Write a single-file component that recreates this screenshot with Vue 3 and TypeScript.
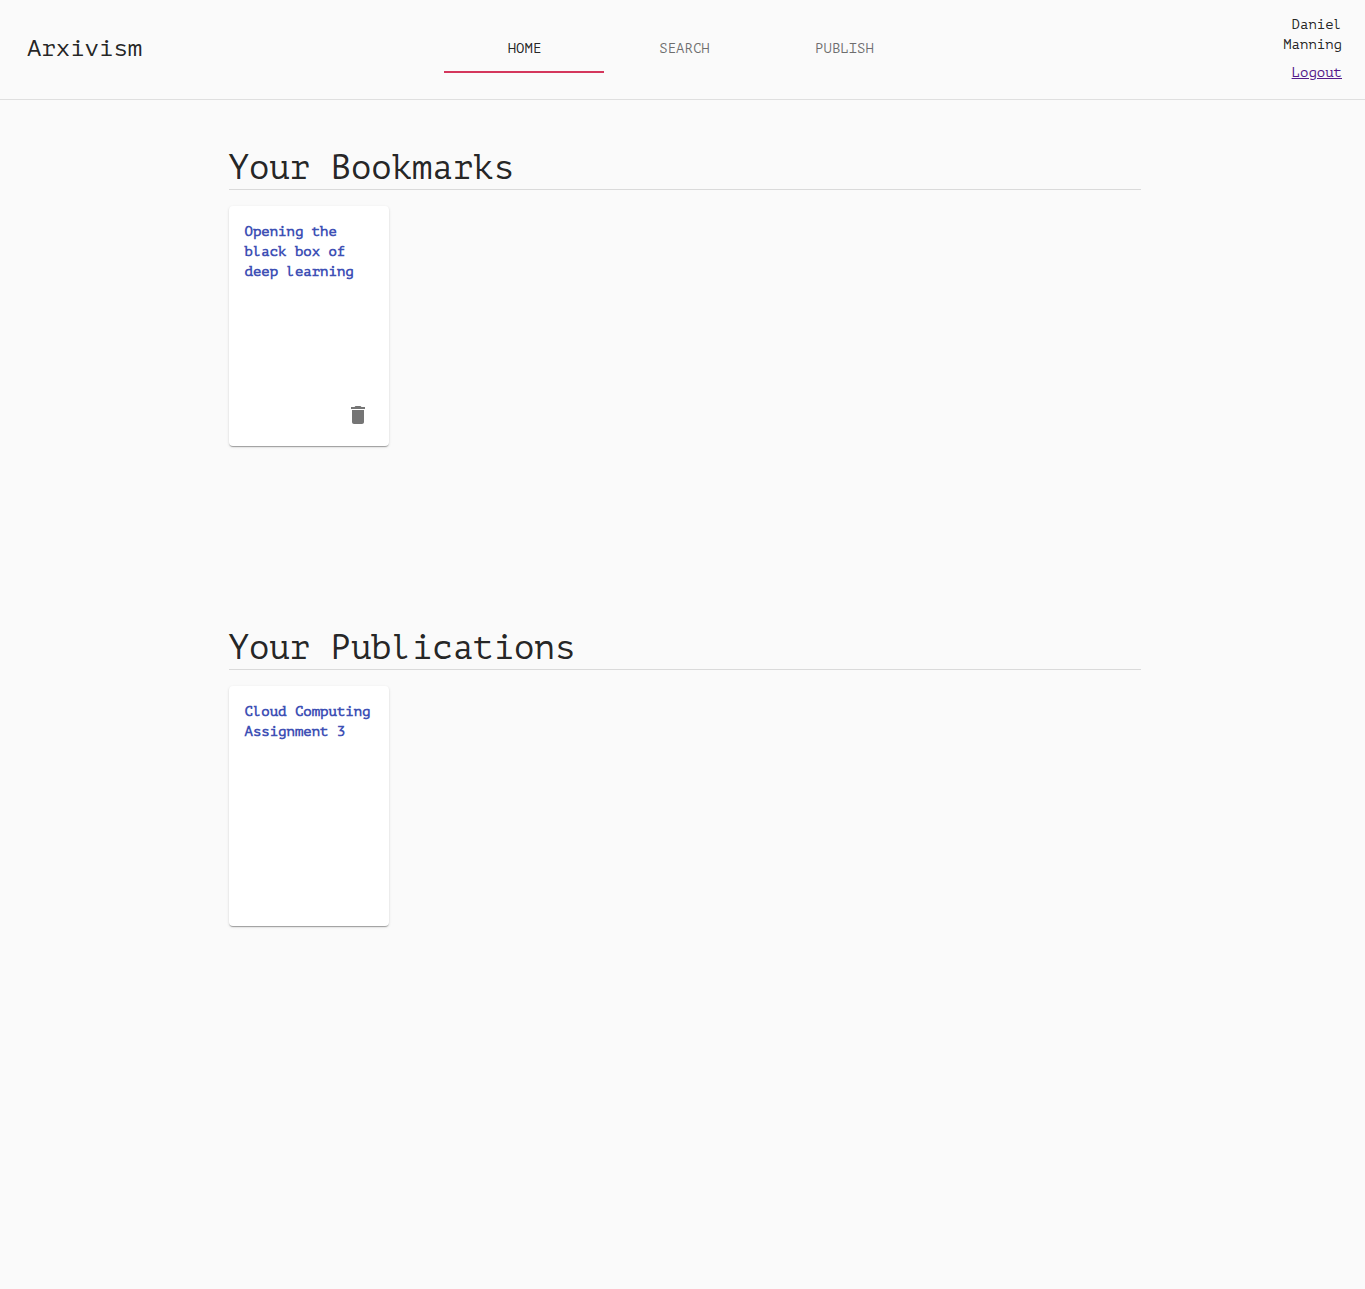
<script setup lang="ts">
interface Article {
  title: string
  removable: boolean
}

interface Section {
  heading: string
  articles: Article[]
}

const tabs: string[] = ['Home', 'Search', 'Publish']
const activeTab = 'Home'

const sections: Section[] = [
  {
    heading: 'Your Bookmarks',
    articles: [{ title: 'Opening the black box of deep learning', removable: true }],
  },
  {
    heading: 'Your Publications',
    articles: [{ title: 'Cloud Computing Assignment 3', removable: false }],
  },
]
</script>

<template>
  <div class="page">
    <header class="topbar">
      <div class="brand">Arxivism</div>
      <nav class="tabs">
        <a v-for="tab in tabs" :key="tab" class="tab" :class="{ active: tab === activeTab }">{{ tab }}</a>
      </nav>
      <div class="user">
        <div class="name">Daniel Manning</div>
        <a class="logout" href="#">Logout</a>
      </div>
    </header>
    <main class="content">
      <section v-for="section in sections" :key="section.heading" class="section">
        <h4 class="heading">{{ section.heading }}</h4>
        <div class="cards">
          <article v-for="article in section.articles" :key="article.title" class="card">
            <a class="title">{{ article.title }}</a>
            <button v-if="article.removable" class="remove" aria-label="Remove bookmark">
              <svg viewBox="0 0 24 24" width="24" height="24">
                <path d="M6 19c0 1.1.9 2 2 2h8c1.1 0 2-.9 2-2V7H6v12zM19 4h-3.5l-1-1h-5l-1 1H5v2h14V4z" />
              </svg>
            </button>
          </article>
        </div>
      </section>
    </main>
  </div>
</template>

<style>
body {
  background: #fafafa;
}
</style>

<style scoped>
.page {
  min-height: 1289px;
  background: #fafafa;
  color: rgba(0, 0, 0, 0.87);
  font-family: "PT Mono", "Liberation Mono", monospace;
  font-size: 14px;
  line-height: 20px;
}
.page * {
  box-sizing: border-box;
}
.topbar {
  display: grid;
  grid-template-columns: 444px 480px 1fr;
  height: 100px;
  border-bottom: 1px solid #dfdfdf;
}
.brand {
  padding: 33px 0 0 27px;
  font-size: 24px;
  line-height: 32px;
}
.tabs {
  display: flex;
  height: 48px;
  margin-top: 25px;
}
.tab {
  display: flex;
  flex: 0 0 160px;
  align-items: center;
  justify-content: center;
  padding: 2px 0 0 1px;
  border-bottom: 2px solid transparent;
  color: rgba(0, 0, 0, 0.56);
  text-transform: uppercase;
}
.tab.active {
  border-color: #d4365c;
  color: rgba(0, 0, 0, 0.87);
}
.user {
  display: flex;
  flex-direction: column;
  align-items: flex-end;
  padding: 15px 23px 0 0;
  text-align: right;
}
.name {
  width: 80px;
}
.logout {
  margin-top: 8px;
  color: #551a8b;
  text-decoration: underline;
}
.content {
  width: 912px;
  margin: 0 0 0 229px;
  padding-top: 46px;
}
.section {
  height: 480px;
}
.heading {
  height: 44px;
  margin: 0;
  border-bottom: 1px solid #dadada;
  font-size: 34px;
  font-weight: 400;
  line-height: 45px;
  text-indent: -0.5px;
}
.cards {
  display: flex;
  gap: 16px;
  padding-top: 16px;
}
.card {
  display: flex;
  flex-direction: column;
  justify-content: space-between;
  width: 160px;
  height: 240px;
  padding: 16px 15px 16px 15.5px;
  border-radius: 4px;
  background: #fff;
  box-shadow: 0 2px 1px -1px rgba(0, 0, 0, 0.2), 0 1px 1px 0 rgba(0, 0, 0, 0.14), 0 1px 3px 0 rgba(0, 0, 0, 0.12);
}
.title {
  color: #3f51b5;
  font-weight: 700;
}
.remove {
  display: flex;
  align-self: flex-end;
  margin: 0 4px 3px 0;
  padding: 0;
  border: 0;
  background: none;
}
.remove svg {
  fill: #757575;
}
</style>
